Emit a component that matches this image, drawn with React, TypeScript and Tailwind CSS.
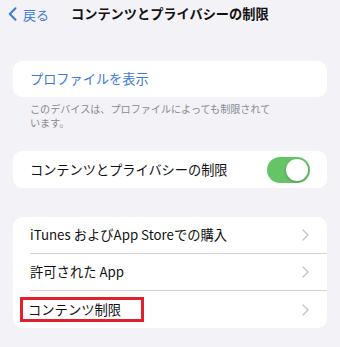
const FONT = "font-['Noto_Sans_CJK_JP','Noto_Sans',sans-serif]";

function Chevron() {
  return (
    <svg width="7" height="12" viewBox="0 0 7 12" className="shrink-0">
      <path d="M1 1l5 5-5 5" fill="none" stroke="#c4c4c7" strokeWidth="1.4" strokeLinecap="round" strokeLinejoin="round" />
    </svg>
  );
}

function Row({ children, last }: { children: React.ReactNode; last?: boolean }) {
  return (
    <div className="flex h-[37px] items-stretch pl-[17px]">
      <div
        className={
          "flex flex-1 items-center justify-between pr-[18px] " +
          (last ? "" : "border-b-[0.5px] border-[#d1d1d6]")
        }
      >
        <div className="text-[13.3px] text-[#111]">{children}</div>
        <Chevron />
      </div>
    </div>
  );
}

export default function App() {
  return (
    <div className={`${FONT} h-[347px] w-[340px] overflow-hidden bg-[#f2f2f7]`}>
      {/* nav bar */}
      <div className="flex h-[28px] items-center pl-[8px]">
        <div className="flex items-center gap-[6px] text-[#3c7bd8]">
          <svg width="9" height="14" viewBox="0 0 9 14">
            <path d="M7.5 1.2L1.8 7l5.7 5.8" fill="none" stroke="#3c7bd8" strokeWidth="2" strokeLinecap="round" strokeLinejoin="round" />
          </svg>
          <span className="text-[13px] leading-none">戻る</span>
        </div>
        <div className="ml-[22px] text-[13.2px] font-bold leading-none text-[#111]">
          コンテンツとプライバシーの制限
        </div>
      </div>

      <div className="px-[13px]">
        <div className="mt-[33px] flex h-[36px] items-center rounded-[9px] bg-white px-[17px] text-[13.2px] text-[#3c7bd8]">
          プロファイルを表示
        </div>
        <p className="mt-[5px] max-w-[278px] px-[17px] text-[10.1px] leading-[14px] text-[#8a8a8e]">
          このデバイスは、プロファイルによっても制限されています。
        </p>

        <div className="mt-[21px] flex h-[37px] items-center justify-between rounded-[9px] bg-white pl-[17px] pr-[17px]">
          <span className="text-[13.2px] text-[#111]">コンテンツとプライバシーの制限</span>
          <div className="flex h-[26px] w-[43px] items-center justify-end rounded-full bg-[#65c466] p-[2px]">
            <div className="h-[22px] w-[22px] rounded-full bg-white shadow-[0_1px_3px_rgba(0,0,0,0.25)]" />
          </div>
        </div>

        <div className="mt-[29px] overflow-hidden rounded-[9px] bg-white">
          <Row>iTunes およびApp Storeでの購入</Row>
          <Row>許可された App</Row>
          <Row last>
            <span className="-ml-[10px] inline-block border-[3px] border-[#e0202a] pl-[5px] pr-[20px] leading-[19px]">
              コンテンツ制限
            </span>
          </Row>
        </div>
      </div>
    </div>
  );
}
